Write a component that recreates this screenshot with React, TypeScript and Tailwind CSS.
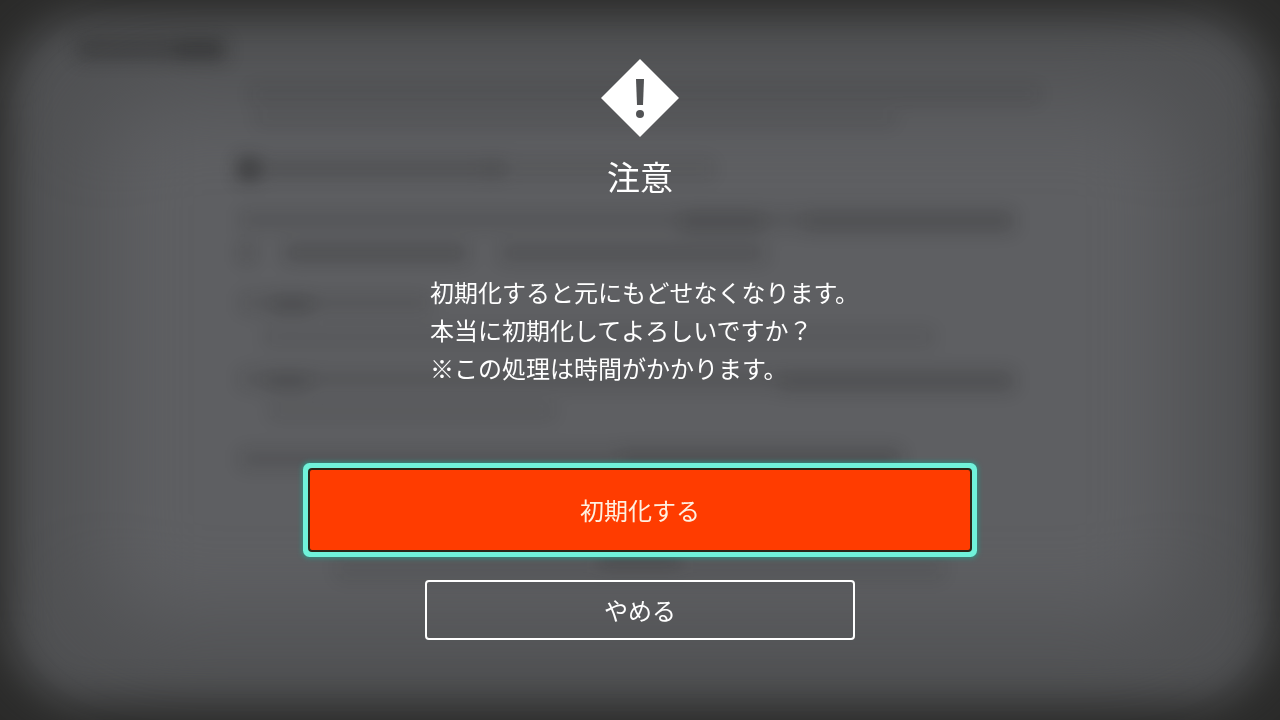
interface Smudge {
  x: number;
  y: number;
  w: number;
  h: number;
  o: number;
}

// Rows of the settings page that show through behind the dialog
const smudges: Smudge[] = [
  { x: 76, y: 38, w: 146, h: 22, o: 0.4 },
  { x: 176, y: 40, w: 52, h: 20, o: 0.3 },
  { x: 250, y: 86, w: 790, h: 16, o: 0.14 },
  { x: 255, y: 112, w: 640, h: 14, o: 0.12 },
  { x: 238, y: 158, w: 22, h: 22, o: 0.75 },
  { x: 264, y: 160, w: 240, h: 18, o: 0.26 },
  { x: 484, y: 160, w: 230, h: 18, o: 0.14 },
  { x: 240, y: 210, w: 774, h: 20, o: 0.18 },
  { x: 680, y: 212, w: 84, h: 20, o: 0.22 },
  { x: 804, y: 212, w: 210, h: 20, o: 0.18 },
  { x: 240, y: 244, w: 14, h: 18, o: 0.3 },
  { x: 284, y: 244, w: 184, h: 18, o: 0.3 },
  { x: 500, y: 244, w: 265, h: 18, o: 0.25 },
  { x: 240, y: 294, w: 190, h: 18, o: 0.18 },
  { x: 272, y: 296, w: 40, h: 18, o: 0.25 },
  { x: 264, y: 328, w: 670, h: 18, o: 0.12 },
  { x: 240, y: 370, w: 774, h: 18, o: 0.2 },
  { x: 266, y: 372, w: 44, h: 20, o: 0.2 },
  { x: 780, y: 374, w: 234, h: 18, o: 0.18 },
  { x: 270, y: 404, w: 284, h: 14, o: 0.16 },
  { x: 240, y: 450, w: 662, h: 18, o: 0.22 },
  { x: 620, y: 448, w: 280, h: 18, o: 0.16 },
  { x: 336, y: 556, w: 608, h: 24, o: 0.12 },
  { x: 600, y: 550, w: 80, h: 16, o: 0.3 },
];

function Backdrop() {
  return (
    <div className="absolute inset-0 overflow-hidden" aria-hidden="true">
      <div className="absolute inset-x-2 inset-y-4 rounded-[80px] bg-[#505153] blur-[20px]" />
      <div className="absolute inset-x-24 inset-y-24 rounded-[60px] bg-[#5e5f62] blur-[44px]" />
      <svg
        className="absolute inset-0 h-full w-full"
        viewBox="0 0 1280 720"
        preserveAspectRatio="xMidYMid slice"
      >
        <defs>
          <filter
            id="soften"
            x="-10%"
            y="-10%"
            width="120%"
            height="120%"
            colorInterpolationFilters="sRGB"
          >
            <feGaussianBlur stdDeviation="9" />
          </filter>
        </defs>
        <g filter="url(#soften)" fill="#1c1c1c" opacity="0.7">
          {smudges.map((s, i) => (
            <rect key={i} x={s.x} y={s.y} width={s.w} height={s.h} opacity={s.o} />
          ))}
        </g>
      </svg>
    </div>
  );
}

function WarningIcon() {
  return (
    <svg className="h-[78px] w-[78px]" viewBox="0 0 78 78" aria-hidden="true">
      <path d="M39 0 78 39 39 78 0 39Z" fill="#fff" />
      <path d="M35 20h8l-1 26h-6Z" fill="#525355" />
      <circle cx="39" cy="55" r="4" fill="#525355" />
    </svg>
  );
}

export default function App() {
  return (
    <div className="relative min-h-screen bg-[#2b2b2a] font-['Noto_Sans_CJK_JP',sans-serif] text-white">
      <Backdrop />

      <main
        role="alertdialog"
        aria-labelledby="dialog-title"
        aria-describedby="dialog-message"
        className="relative flex flex-col items-center px-4 pt-[59px] pb-20"
      >
        <WarningIcon />

        <h1 id="dialog-title" className="mt-[19px] text-[33px] leading-10">
          注意
        </h1>

        {/* Message */}
        <div
          id="dialog-message"
          className="mt-[77px] w-full max-w-[430px] pl-[5px] text-2xl leading-[38px] sm:whitespace-nowrap"
        >
          <p>初期化すると元にもどせなくなります。</p>
          <p>本当に初期化してよろしいですか？</p>
          <p>※この処理は時間がかかります。</p>
        </div>

        {/* Actions */}
        <div className="mt-[83px] flex w-full flex-col items-center gap-[30px] text-2xl">
          <button
            type="button"
            className="h-20 w-full max-w-[660px] rounded-xs bg-[#ff3c00] text-[#fff0e0] shadow-[0_0_0_2px_#2a2618,0_0_0_7px_#70f2da,0_0_5px_8px_#2f8f80] outline-none"
          >
            初期化する
          </button>
          <button
            type="button"
            className="h-[60px] w-full max-w-[430px] rounded-sm border-2 border-white"
          >
            やめる
          </button>
        </div>
      </main>
    </div>
  );
}
